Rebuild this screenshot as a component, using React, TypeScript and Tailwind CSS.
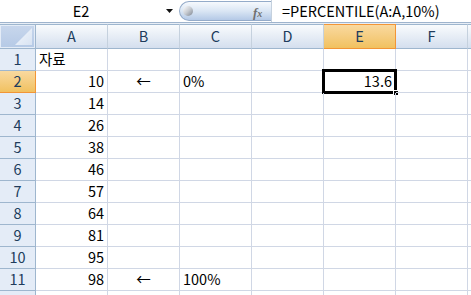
import React from "react";

const cols = ["A", "B", "C", "D", "E", "F"];

type Cell = { t?: string; align?: "l" | "r" | "c" };
const data: Record<number, Record<string, Cell>> = {
  1: { A: { t: "자료", align: "l" } },
  2: { A: { t: "10", align: "r" }, B: { t: "←", align: "c" }, C: { t: "0%", align: "l" }, E: { t: "13.6", align: "r" } },
  3: { A: { t: "14", align: "r" } },
  4: { A: { t: "26", align: "r" } },
  5: { A: { t: "38", align: "r" } },
  6: { A: { t: "46", align: "r" } },
  7: { A: { t: "57", align: "r" } },
  8: { A: { t: "64", align: "r" } },
  9: { A: { t: "81", align: "r" } },
  10: { A: { t: "95", align: "r" } },
  11: { A: { t: "98", align: "r" }, B: { t: "←", align: "c" }, C: { t: "100%", align: "l" } },
  12: {},
};

const font = { fontFamily: '"Noto Sans CJK KR", "Noto Sans", sans-serif' };

export default function App() {
  const rows = Array.from({ length: 12 }, (_, i) => i + 1);
  return (
    <div className="w-[471px] h-[295px] overflow-hidden bg-white text-black" style={font}>
      {/* formula bar */}
      <div className="flex h-[22px] bg-white">
        <div className="w-[179px] flex items-center">
          <div className="w-[162px] text-center text-[14.5px] leading-none">E2</div>
          <svg width="7" height="4" viewBox="0 0 7 4" className="ml-[4px]">
            <path d="M0 0 H7 L3.5 4 Z" fill="#111" />
          </svg>
        </div>
        <div className="relative w-[92px] h-[20px] mt-[1px] rounded-l-[10px] border border-r-0 border-[#94abc9] bg-gradient-to-b from-[#f6f9fd] via-[#dae6f4] to-[#b4c9e6] flex items-center">
          <div className="ml-[3px] w-[10px] h-[10px] rounded-full bg-gradient-to-br from-white via-[#c8ccd2] to-[#7d8590]" />
          <span
            className="absolute left-[73px] top-[1px] text-[13px] italic font-bold text-[#707070]"
            style={{ fontFamily: '"Liberation Serif", serif' }}
          >
            <span>f</span>
            <span className="text-[10px]">x</span>
          </span>
        </div>
        <div className="flex-1 border-l border-[#c5d1de] flex items-center pl-[10px] text-[14.5px] leading-none">
          =PERCENTILE(A:A,10%)
        </div>
      </div>
      <div className="h-[1px] bg-[#9fb4cd]" />
      <div className="h-[1px] bg-[#e8eef6]" />

      {/* header row */}
      <div className="flex h-[25px]">
        <div className="relative w-[36px] h-full bg-[#e4ecf7] border-r border-b border-[#9eb6ce] border-t border-t-[#9eb6ce] overflow-hidden">
          <div className="absolute inset-[1px] bg-gradient-to-b from-[#c7d6ec] to-[#b6cae6]" />
          <svg className="absolute right-[3px] bottom-[3px]" width="17" height="17" viewBox="0 0 17 17">
            <defs>
              <linearGradient id="tri" x1="0" y1="0" x2="1" y2="1">
                <stop offset="0" stopColor="#f4f8fd" />
                <stop offset="1" stopColor="#d8e3f2" />
              </linearGradient>
            </defs>
            <path d="M17 0 V17 H0 Z" fill="url(#tri)" />
          </svg>
        </div>
        {cols.map((c) => (
          <div
            key={c}
            className={
              c === "E"
                ? "w-[72px] h-full border-r border-b border-t border-[#f29536] bg-gradient-to-b from-[#f9d99f] to-[#f1c15f] flex items-center justify-center text-[14.5px] text-[#203c5c] leading-none"
                : "w-[72px] h-full border-r border-b border-t border-[#9eb6ce] border-r-[#c5d1de] bg-gradient-to-b from-[#f9fbfd] to-[#d4dfee] flex items-center justify-center text-[14.5px] text-[#203c5c] leading-none"
            }
          >
            {c}
          </div>
        ))}
        <div className="flex-1 h-full border-b border-t border-[#9eb6ce] bg-gradient-to-b from-[#f9fbfd] to-[#d4dfee]" />
      </div>

      {/* body */}
      {rows.map((r) => (
        <div key={r} className="flex h-[22px]">
          <div
            className={
              r === 2
                ? "w-[36px] h-full border-r border-b border-[#f29536] bg-gradient-to-b from-[#f9d99f] to-[#f1c15f] flex items-center justify-center text-[14.5px] text-[#203c5c] leading-none"
                : "w-[36px] h-full border-r border-b border-[#9eb6ce] bg-[#e4ecf7] flex items-center justify-center text-[14.5px] text-[#203c5c] leading-none"
            }
          >
            {r <= 11 ? r : null}
          </div>
          {cols.map((c) => {
            const cell = data[r]?.[c];
            const sel = r === 2 && c === "E";
            const just =
              cell?.align === "r" ? "justify-end pr-[3px]" : cell?.align === "c" ? "justify-center" : "justify-start pl-[3px]";
            return (
              <div
                key={c}
                className={`relative w-[72px] h-full border-r border-b border-[#d0d7e5] flex items-center text-[14.5px] leading-none ${just}`}
              >
                {cell?.t}
                {sel && (
                  <>
                    <div className="absolute left-[-2px] top-[-2px] right-[-2px] bottom-[-2px] border-[3px] border-black" />
                    <div className="absolute right-[-4px] bottom-[-4px] w-[6px] h-[6px] bg-black border border-white" />
                  </>
                )}
              </div>
            );
          })}
          <div className="flex-1 h-full border-b border-[#d0d7e5]" />
        </div>
      ))}
    </div>
  );
}
